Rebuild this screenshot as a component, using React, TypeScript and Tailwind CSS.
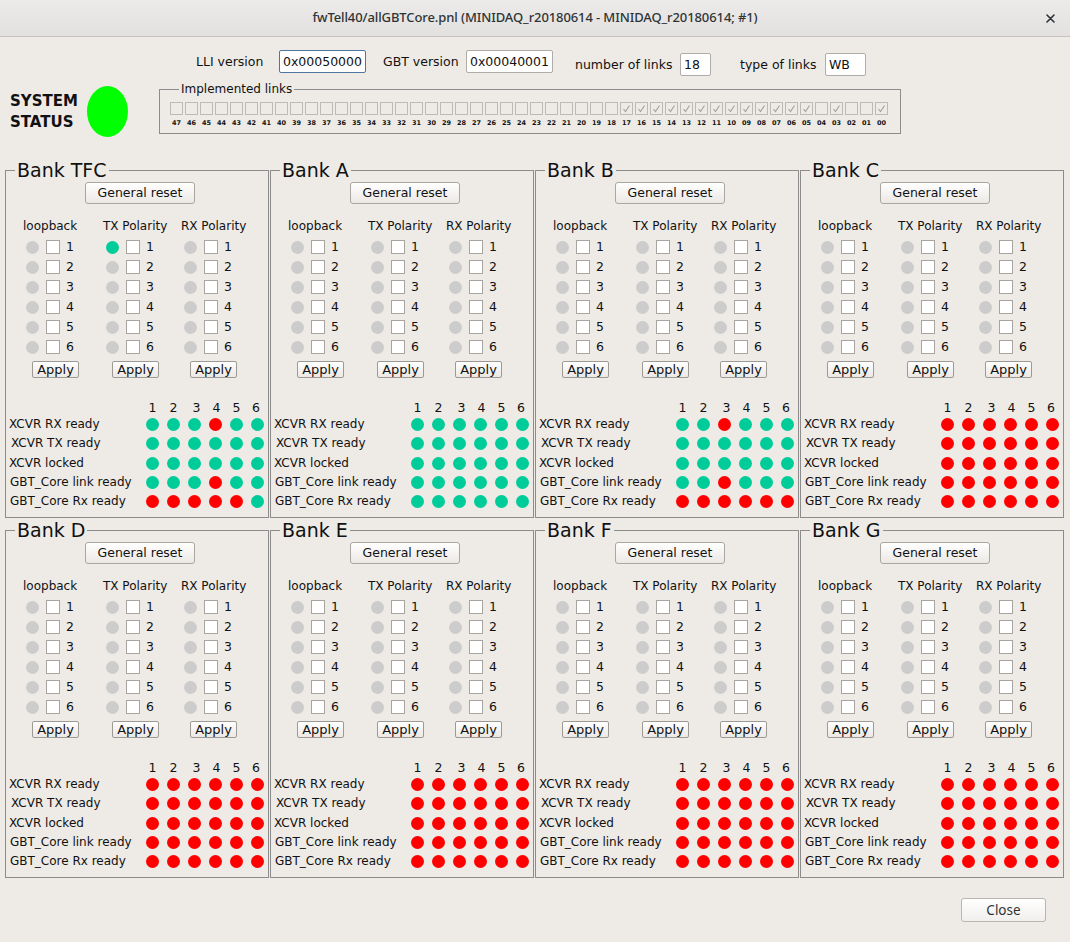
import React from 'react';

type Bank = {
  name: string;
  tx1?: boolean;
  status: string[];
};

const allGreen = ['gggggg', 'gggggg', 'gggggg', 'gggggg', 'gggggg'];
const allRed = ['rrrrrr', 'rrrrrr', 'rrrrrr', 'rrrrrr', 'rrrrrr'];

const banks: Bank[] = [
  { name: 'Bank TFC', tx1: true, status: ['gggrgg', 'gggggg', 'gggggg', 'gggrgg', 'rrrrrg'] },
  { name: 'Bank A', status: allGreen },
  { name: 'Bank B', status: ['ggrggg', 'gggggg', 'gggggg', 'ggrggg', 'rrrrrr'] },
  { name: 'Bank C', status: allRed },
  { name: 'Bank D', status: allRed },
  { name: 'Bank E', status: allRed },
  { name: 'Bank F', status: allRed },
  { name: 'Bank G', status: allRed },
];

// label, left indent in px
const statusRows: [string, string][] = [
  ['XCVR RX ready', 'pl-[3px]'],
  ['XCVR TX ready', 'pl-[5px]'],
  ['XCVR locked', 'pl-[3px]'],
  ['GBT_Core link ready', 'pl-[4px]'],
  ['GBT_Core Rx ready', 'pl-[4px]'],
];

const numNudge = ['', '', 'pl-[4px]', 'pl-[2px]', '', 'pr-[3px]'];

// implemented links shown as ticked
const checkedLinks = new Set([17, 16, 15, 14, 13, 12, 11, 10, 9, 8, 7, 6, 5, 3, 0]);

function Led({ c }: { c: string }) {
  const color = c === 'g' ? 'bg-[#00cc99]' : c === 'r' ? 'bg-[#ff0000]' : 'bg-[#cccccc]';
  return <span className={`block h-[13px] w-[13px] rounded-full ${color}`} />;
}

function Field({ width, value, focused }: { width: string; value: string; focused?: boolean }) {
  return (
    <div
      className={`h-[23px] ${width} rounded-[2px] border bg-white px-[3px] text-[12.5px] leading-[21px] ${
        focused ? 'border-[#4f75a3]' : 'border-[#b0aca8]'
      }`}
    >
      {value}
    </div>
  );
}

function BankPanel({ bank }: { bank: Bank }) {
  const cols = ['loopback', 'TX Polarity', 'RX Polarity'];
  return (
    <fieldset className="h-[358px] min-w-0 border border-[#8c8c8c]">
      <legend className="ml-[9px] px-[2px] text-[19px] leading-[20px]">{bank.name}</legend>

      <button className="mt-[2px] ml-[79px] block h-[22px] w-[110px] rounded-[3px] border border-[#aaa6a2] bg-linear-to-b from-white to-[#ebe8e4] text-[12.5px] leading-[20px]">
        General reset
      </button>

      <div className="mt-[12px] flex pl-[17px]">
        {cols.map((col, ci) => (
          <div key={col} className={ci === 0 ? 'w-[80px]' : 'w-[78px]'}>
            <div className="h-[21px] text-[12px] leading-[20px]">{col}</div>
            {[1, 2, 3, 4, 5, 6].map((n) => (
              <div key={n} className="flex h-[20px] items-center">
                <span className="ml-[3px]">
                  <Led c={ci === 1 && n === 1 && bank.tx1 ? 'g' : 'off'} />
                </span>
                <span className="ml-[7px] block h-[14px] w-[14px] border border-[#a8a5a1] bg-white" />
                <span className="ml-[6px] text-[12.5px] leading-[14px]">{n}</span>
              </div>
            ))}
            <button className="mt-[4px] ml-[9px] block h-[17px] w-[47px] rounded-[2px] border border-[#9d9995] bg-linear-to-b from-white to-[#ebe8e4] text-[13px] leading-[15px]">
              Apply
            </button>
          </div>
        ))}
      </div>

      <div className="mt-[22px]">
        <div className="flex h-[15px] items-center">
          <div className="w-[136px]" />
          {[1, 2, 3, 4, 5, 6].map((n, i) => (
            <span key={n} className={`flex w-[21px] justify-center text-[12.5px] leading-[15px] ${numNudge[i]}`}>
              {n}
            </span>
          ))}
        </div>
        {statusRows.map(([label, indent], ri) => (
          <div key={label} className="flex h-[19.25px] items-center">
            <div className={`w-[136px] text-[12px] leading-[19px] whitespace-nowrap ${indent}`}>{label}</div>
            {bank.status[ri].split('').map((c, i) => (
              <span key={i} className="flex w-[21px] justify-center">
                <Led c={c} />
              </span>
            ))}
          </div>
        ))}
      </div>
    </fieldset>
  );
}

export default function App() {
  const links = Array.from({ length: 48 }, (_, i) => 47 - i);

  return (
    <div className="min-h-[942px] w-[1070px] bg-[#eeebe7] font-['DejaVu_Sans',sans-serif] text-[#111]">
      {/* window title bar */}
      <div className="flex h-[37px] items-center rounded-t-[6px] border-b border-[#c6c2bd] bg-linear-to-b from-[#ecebea] to-[#e3e1df]">
        <div className="w-[40px]" />
        <div className="flex-1 text-center font-['Noto_Sans',sans-serif] text-[13px] font-medium tracking-[-0.1px] text-[#2e3436]">
          fwTell40/allGBTCore.pnl (MINIDAQ_r20180614 - MINIDAQ_r20180614; #1)
        </div>
        <div className="flex w-[40px] justify-center">
          <svg width="9" height="9" viewBox="0 0 9 9">
            <path d="M1 1 L8 8 M8 1 L1 8" stroke="#2e3436" strokeWidth="1.6" strokeLinecap="round" />
          </svg>
        </div>
      </div>

      {/* versions */}
      <div className="mt-[13px] flex items-start pl-[196px] text-[12.5px]">
        <span className="w-[83px] leading-[23px]">LLI version</span>
        <Field width="w-[87px]" value="0x00050000" focused />
        <span className="ml-[17px] w-[83px] leading-[23px]">GBT version</span>
        <Field width="w-[87px]" value="0x00040001" />
        <div className="mt-[3px] flex">
          <span className="ml-[22px] w-[105px] leading-[23px]">number of links</span>
          <Field width="w-[31px]" value="18" />
          <span className="ml-[29px] w-[85px] leading-[23px]">type of links</span>
          <Field width="w-[41px]" value="WB" />
        </div>
      </div>

      {/* system status + implemented links */}
      <div className="mt-[5px] flex items-start pl-[10px]">
        <div className="mt-[10px] w-[77px] text-[15px] font-bold leading-[21px]">
          <div>SYSTEM</div>
          <div>STATUS</div>
        </div>
        <div className="mt-[5px] h-[51px] w-[41px] rounded-[50%] bg-[#00ff00]" />
        <fieldset className="ml-[31px] w-[742px] border border-[#8c8c8c] pl-[10px] pb-[6px]">
          <legend className="ml-[9px] px-[2px] text-[12px] leading-[16px]">Implemented links</legend>
          <div className="mt-[5px] flex gap-x-[2px]">
            {links.map((n) => (
              <div key={n} className="flex w-[13px] flex-col items-center">
                <span className="flex h-[13px] w-[13px] items-center justify-center border border-[#bdb9b5]">
                  {checkedLinks.has(n) && (
                    <svg width="9" height="9" viewBox="0 0 9 9">
                      <path d="M1.5 5 L3.5 7.5 L7.5 1.5" fill="none" stroke="#a3a09c" strokeWidth="1.1" />
                    </svg>
                  )}
                </span>
                <span className="mt-[4px] text-[6.5px] font-bold leading-[8px] whitespace-nowrap">
                  {String(n).padStart(2, '0')}
                </span>
              </div>
            ))}
          </div>
        </fieldset>
      </div>

      {/* banks */}
      <div className="mt-[23px] grid grid-cols-[264px_264px_264px_264px] gap-x-[1px] gap-y-[2px] pl-[5px]">
        {banks.map((b) => (
          <BankPanel key={b.name} bank={b} />
        ))}
      </div>

      <div className="mt-[20px] flex justify-end pr-[24px]">
        <button className="h-[24px] w-[85px] rounded-[3px] border border-[#b9b5b0] bg-linear-to-b from-white to-[#f1efed] font-['Noto_Sans',sans-serif] text-[13.5px] text-[#2e3436]">
          Close
        </button>
      </div>
    </div>
  );
}
